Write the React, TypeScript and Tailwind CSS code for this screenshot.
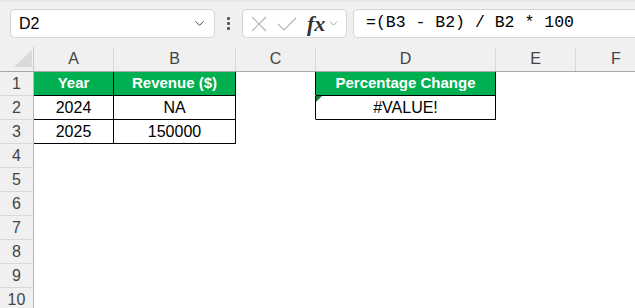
import { ChevronDown } from "lucide-react";

const cols = [
  { key: "A", w: "w-[80px]" },
  { key: "B", w: "w-[122px]" },
  { key: "C", w: "w-[80px]" },
  { key: "D", w: "w-[180px]" },
  { key: "E", w: "w-[80px]" },
];

type Cell = { text?: string; head?: boolean; box?: boolean; err?: boolean };

// rows 1..10, cells for A..E
const data: Cell[][] = [
  [{ text: "Year", head: true, box: true }, { text: "Revenue ($)", head: true, box: true }, { box: true }, { text: "Percentage Change", head: true, box: true }, {}],
  [{ text: "2024", box: true }, { text: "NA", box: true }, { box: true }, { text: "#VALUE!", box: true, err: true }, {}],
  [{ text: "2025", box: true }, { text: "150000", box: true }, {}, {}, {}],
];

function Toolbar() {
  return (
    <div className="relative h-[47px] bg-[#f0f0f0] flex items-start pt-[9px] pl-[10px]">
      <div className="absolute inset-x-0 top-0 h-[3px] bg-gradient-to-b from-[#e2e2e2] to-[#f0f0f0]" />
      {/* name box */}
      <div className="w-[205px] h-[29px] bg-white border border-[#d4d4d4] rounded-[5px] flex items-center pl-[8px] pr-[7px]">
        <span className="text-[16px] text-black flex-1">D2</span>
        <ChevronDown className="w-[15px] h-[15px] text-[#444]" strokeWidth={1.6} />
      </div>
      {/* dots */}
      <div className="w-[27px] h-[29px] flex flex-col items-center justify-center gap-[2px]">
        <div className="w-[3px] h-[3px] bg-[#555] rounded-[1px]" />
        <div className="w-[3px] h-[3px] bg-[#555] rounded-[1px]" />
        <div className="w-[3px] h-[3px] bg-[#555] rounded-[1px]" />
      </div>
      {/* formula buttons */}
      <div className="w-[105px] h-[29px] bg-white border border-[#d4d4d4] rounded-[5px] flex items-center pl-[6px]">
        <svg width="20" height="20" viewBox="0 0 20 20" className="mr-[7px]">
          <path d="M3 3 L17 17 M17 3 L3 17" stroke="#b4b4b4" strokeWidth="1.2" fill="none" />
        </svg>
        <svg width="22" height="20" viewBox="0 0 22 20">
          <path d="M2 10 L8 16 L20 4" stroke="#b4b4b4" strokeWidth="1.2" fill="none" />
        </svg>
        <span className="ml-[9px] text-[22px] leading-none italic font-bold text-[#333] font-['Liberation_Serif',serif]">fx</span>
        <ChevronDown className="ml-[2px] w-[13px] h-[13px] text-[#888]" strokeWidth={1.4} />
      </div>
      {/* formula input */}
      <div className="ml-[6px] flex-1 h-[29px] bg-white border border-[#d4d4d4] border-r-0 rounded-l-[5px] flex items-center pl-[12px]">
        <span className="text-[16.5px] text-black font-['Liberation_Mono',monospace] whitespace-nowrap">=(B3 - B2) / B2 * 100</span>
      </div>
    </div>
  );
}

function HeaderRow() {
  return (
    <div className="flex h-[24px] bg-[#f0f0f0] border-b border-[#a8a8a8] box-content">
      <div className="relative w-[34px] h-full border-r border-[#c8c8c8] shrink-0">
        <div className="absolute right-[1px] bottom-[4px] w-0 h-0 border-l-[18px] border-l-transparent border-b-[17px] border-b-[#d9d9d9]" />
      </div>
      {cols.map((c) => (
        <div key={c.key} className={`${c.w} shrink-0 h-full border-r border-[#d8d8d8] flex items-center justify-center text-[16px] text-[#444]`}>
          {c.key}
        </div>
      ))}
      <div className="w-[80px] shrink-0 flex items-center justify-center text-[16px] text-[#444]">F</div>
    </div>
  );
}

function Row({ n, cells }: { n: number; cells: Cell[] }) {
  return (
    <div className="flex h-[24px]">
      <div className="w-[34px] shrink-0 bg-[#f0f0f0] border-r border-b border-r-[#b8b8b8] border-b-[#d8d8d8] flex items-center justify-center text-[16px] text-[#444]">
        {n}
      </div>
      {cols.map((c, i) => {
        const cell = cells[i] || {};
        const nextBox = i === 2 && cells[3]?.box;
        const rb = cell.box || nextBox ? "border-r-black" : "border-r-transparent";
        const bb = cell.box && (cell.text !== undefined) ? "border-b-black" : "border-b-transparent";
        const bg = cell.head ? "bg-[#00b050] text-white font-bold text-[15px]" : "bg-white text-black text-[16px]";
        return (
          <div
            key={c.key}
            className={`${c.w} shrink-0 relative border-r border-b ${rb} ${bb} ${bg} flex items-center justify-center`}
          >
            {cell.err && (
              <div className="absolute left-0 top-0 w-0 h-0 border-t-[6px] border-t-[#1e7a3c] border-r-[6px] border-r-transparent" />
            )}
            {cell.text}
          </div>
        );
      })}
      <div className="flex-1 bg-white" />
    </div>
  );
}

export default function App() {
  return (
    <div className="w-[635px] h-[308px] overflow-hidden bg-white font-['Liberation_Sans',Arial,sans-serif]">
      <Toolbar />
      <HeaderRow />
      {Array.from({ length: 10 }).map((_, i) => (
        <Row key={i} n={i + 1} cells={data[i] || []} />
      ))}
    </div>
  );
}
